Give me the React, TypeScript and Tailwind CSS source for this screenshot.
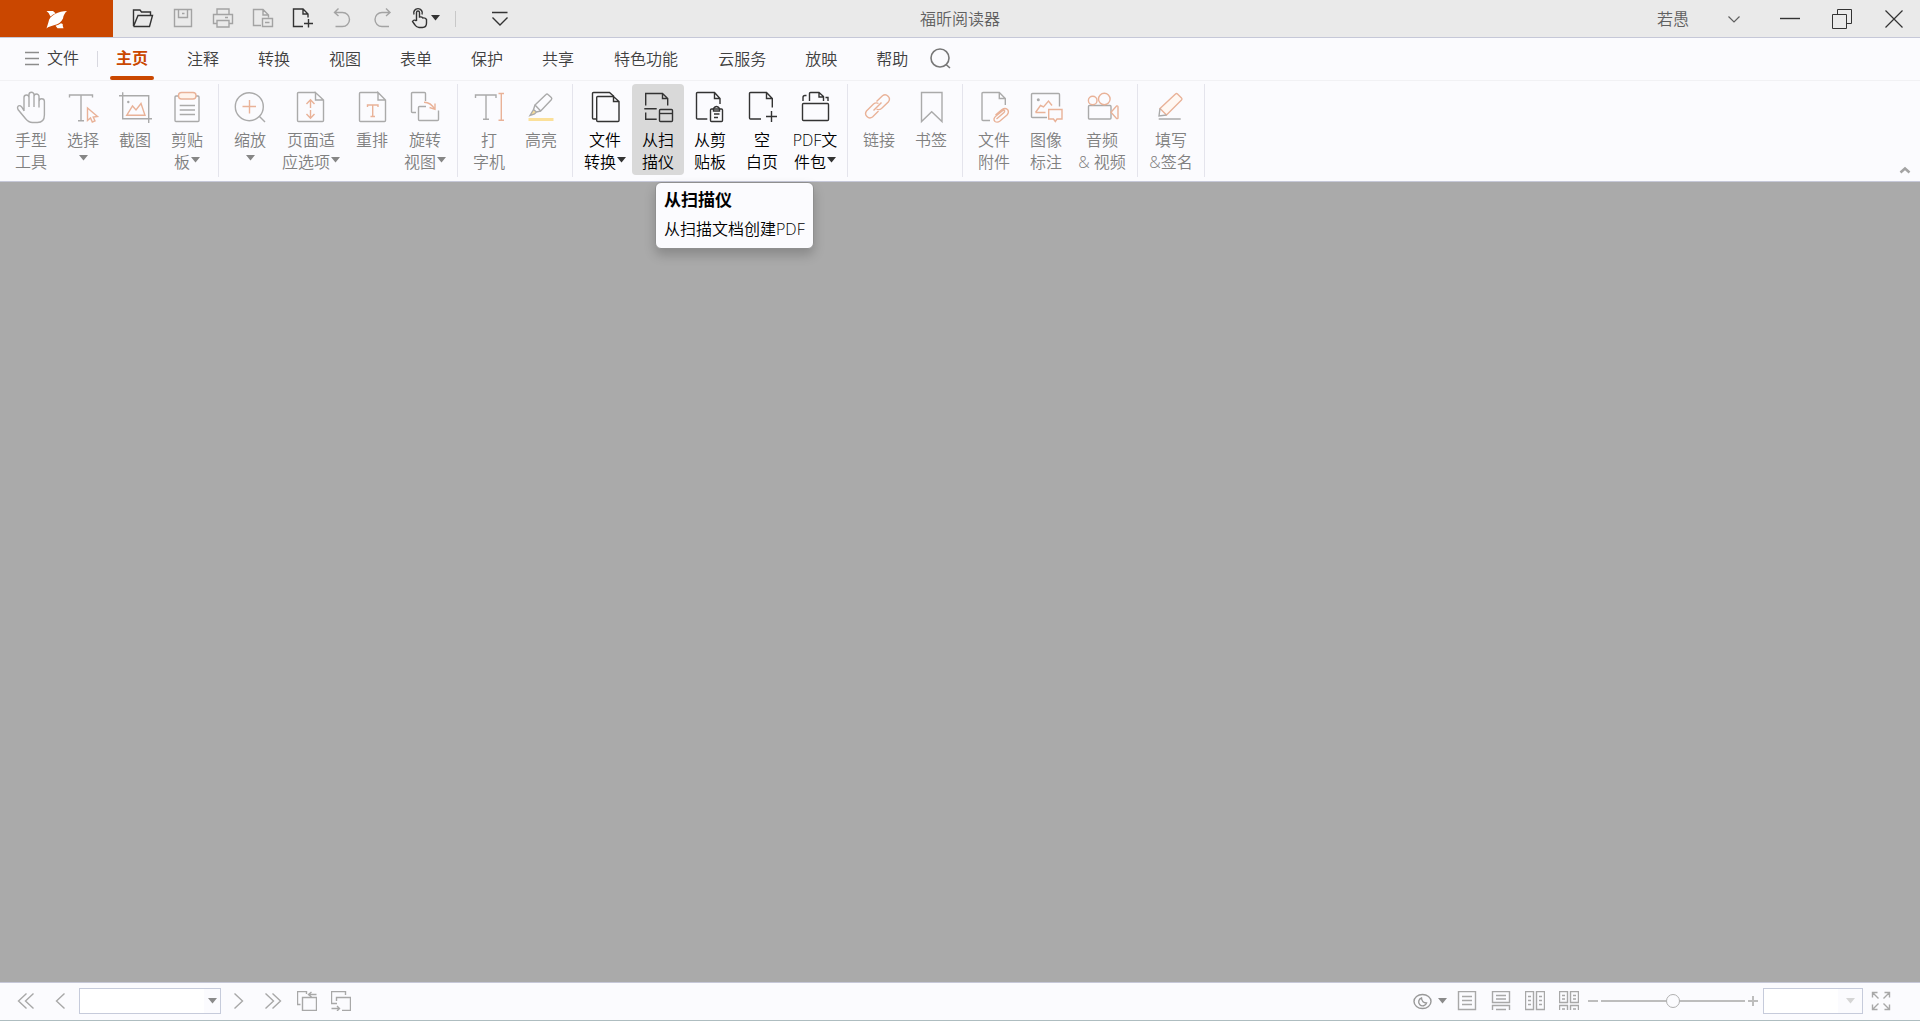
import React from "react";
import clsx from "clsx";

type IconProps = {
  size?: number;
  width?: number;
  className?: string;
  children: React.ReactNode;
};

function Icon({ size = 24, width, className, children }: IconProps) {
  return (
    <svg
      width={width ?? size}
      height={size}
      viewBox={`0 0 ${width ?? size} ${size}`}
      fill="none"
      stroke="currentColor"
      strokeWidth="1.4"
      className={clsx("shrink-0", className)}
      aria-hidden
    >
      {children}
    </svg>
  );
}

function Caret({ className }: { className?: string }) {
  return (
    <svg width="9" height="6" viewBox="0 0 9 6" className={clsx("shrink-0", className)} aria-hidden>
      <path d="M0 0H9L4.5 5.5Z" fill="currentColor" />
    </svg>
  );
}

const ACCENT = "#e9b298";

// Ribbon icons, all drawn on a 36x36 grid
const icons = {
  hand: (
    <path d="M11 22V8.5a2.4 2.4 0 0 1 5 0V18M16 8.5V5.7a2.5 2.5 0 0 1 5 0V18M21 7.5a2.5 2.5 0 0 1 5 0V18.5M26 12.5a2.7 2.7 0 0 1 5.4 0V26c0 5-3 7.5-7 7.5h-5c-3 0-5-1.5-7-4L5 20.5c-1.3-2.5.3-4.5 2.5-3.7 1.6.8 2.3 2.7 3.5 5.2" />
  ),
  select: (
    <>
      <path d="M4.5 8.5V6H27.5V8.5M16 6V31.7M13 31.7H19" />
      <path stroke={ACCENT} d="M22.5 19V31.5L25.5 29 27.3 33 30 31.8 28.2 28 32.5 27.5Z" />
    </>
  ),
  snapshot: (
    <>
      <path d="M5.7 3.3V29.7H35M2 6.7H31.7V34" />
      <circle cx="11.3" cy="13" r="1.2" fill="currentColor" stroke="none" />
      <path stroke={ACCENT} d="M9.7 26.3L15.5 17 19 21 24 14.5 28 26.3Z" />
    </>
  ),
  clipboard: (
    <>
      <rect x="6" y="7" width="24" height="25.5" rx="1" />
      <rect x="9.5" y="3.5" width="17.5" height="6.5" rx="3" fill="#fff4ec" stroke={ACCENT} />
      <path d="M10.7 16.5H26M10.7 21H26M10.7 25.5H26" />
    </>
  ),
  zoom: (
    <>
      <circle cx="17.3" cy="17.7" r="14" />
      <path d="M27 27L33 33" />
      <path stroke={ACCENT} d="M10.5 17.5H24M17.5 11V24.5" />
    </>
  ),
  fit: (
    <>
      <path d="M22.5 3.5H5.5q-1 0-1 1V31.5q0 1 1 1H29.5q1 0 1-1V11L22.5 3.5V11H30.5" />
      <path stroke={ACCENT} d="M17.5 19V11M13.5 15L17.5 10.8 21.5 15M17.5 21V29M13.5 25L17.5 29.2 21.5 25" />
    </>
  ),
  reflow: (
    <>
      <path d="M24 3.5H6.5q-1 0-1 1V31.5q0 1 1 1H30.5q1 0 1-1V11L24 3.5V11H31.5" />
      <path stroke={ACCENT} d="M13.5 18V16H24V18M18.7 16V27.5M16.5 27.5H21" />
    </>
  ),
  rotate: (
    <>
      <path d="M9 23.5H5.5q-1 0-1-1V4.5q0-1 1-1H17.5q1 0 1 1V12" />
      <path d="M19 17.5H12.5q-1 0-1 1V30.5q0 1 1 1H30.5q1 0 1-1V21.5" />
      <path stroke={ACCENT} d="M17 13.3q7 0 10.5 7M22.5 18.5L28 20.3V14.5" />
    </>
  ),
  typewriter: (
    <>
      <path d="M4.5 9V6H25V9M15 6V30.3M12 30.3H18" />
      <path stroke={ACCENT} d="M27.5 4.5H33M27.5 31.3H33M30.3 4.5V31.3" />
    </>
  ),
  highlight: (
    <>
      <path d="M10.5 21L7 26.5 11.5 25 13.3 23Z" fill="#f8dd98" stroke="none" />
      <path d="M12 16L23 5.5q1-1 2 0l3.3 3q1 1 0 2.2L17.7 22Z" />
      <path d="M12 16L10.5 20.5 13.5 23 17.7 22M10.5 20.5L7 26.5 11.5 25 13.5 23" />
      <path stroke="#fbe09a" strokeWidth="3" d="M5.5 30.5H30.5" />
    </>
  ),
  convert: (
    <>
      <path d="M9.7 30H6.5q-1 0-1-1V4.5q0-1 1-1H22.5L27 7.5" />
      <path d="M26.5 7.5H10.7q-1 0-1 1V31.5q0 1 1 1H31q1 0 1-1V12.5L26.5 7.5V12.5H32" />
    </>
  ),
  scanner: (
    <>
      <path d="M5.7 16.5V4.5H22.5L27.7 9.5V16.5M22.5 4.5V9.5H27.7M4.3 19.7H16.7M5.7 23.5V30.3H16.7" />
      <rect x="19.5" y="20.5" width="13" height="12" rx="1" />
      <path d="M19.5 24.5H32.5" />
    </>
  ),
  fromClipboard: (
    <>
      <path d="M15.3 30H5.5q-1 0-1-1V4.5q0-1 1-1H22.5L28 9.5V15M22.5 3.5V9.5H28" />
      <rect x="18.5" y="20" width="12" height="12.5" rx="1" />
      <path d="M21.5 22V19.5Q24.5 15.5 27.5 19.5V22ZM22 25H27.5M22 28.5H26" />
    </>
  ),
  blank: (
    <path d="M17 30H6.5q-1 0-1-1V4.5q0-1 1-1H22.5L28.3 9.5V18.5M22.5 3.5V9.5H28.3M27.5 22V33M22 27.5H33" />
  ),
  portfolio: (
    <>
      <rect x="5.5" y="14.5" width="26" height="17" rx="1" />
      <path d="M6 12V8.5q0-2 2-2H9.5M12.5 12V4.5q0-1 1-1H22L26.5 7.5V12M22 3.5V8H26.5M28.5 8.5H31V12" />
    </>
  ),
  link: (
    <g stroke={ACCENT}>
      <path d="M15.5 12.5L21.5 6.7a4.3 4.3 0 0 1 6 6L20.5 19.5q-2.5 2-5 .5" />
      <path d="M17.5 22L11.5 28a4.3 4.3 0 0 1-6-6L12.5 15q2.5-2 5-.5" />
      <path d="M12.5 21.5L20.5 13.5" />
    </g>
  ),
  bookmark: <path d="M8.5 3.5H29V32.5L18.7 22.7 8.5 32.5Z" />,
  attachment: (
    <>
      <path d="M14 31.5H7q-1 0-1-1V4.5q0-1 1-1H23.3L29.3 9.5V16M23.3 3.5V9.5H29.3" />
      <path
        stroke={ACCENT}
        d="M20.5 30L28 23.5q1.500-2-.5-2.500L20 27q-3.500 3-1 5.500 2.500 1.500 5-.5L31 26q2.500-3 .5-5.500-2.500-2-5.500 0L19.500 26"
      />
    </>
  ),
  image: (
    <>
      <path d="M19 28.5H4.5q-1 0-1-1V5.5q0-1 1-1H30.5q1 0 1 1V17.5" />
      <circle cx="10.3" cy="10.7" r="1.5" fill="currentColor" stroke="none" />
      <path stroke={ACCENT} d="M7.5 23.5L12.5 16.5 15.5 18 20.5 12 24 16.5M7.5 23.5H17.5" />
      <path stroke={ACCENT} d="M20.7 20.5H34V30H29L27.3 32.5 25.5 30H20.7Z" />
    </>
  ),
  video: (
    <>
      <rect x="4.5" y="16.5" width="22.5" height="13.5" rx="1" />
      <g stroke={ACCENT}>
        <circle cx="8.7" cy="11.5" r="4.3" />
        <circle cx="20.3" cy="10" r="5.8" />
        <path d="M27 23.3L32.5 17q1.5-.5 1.5 1V29q0 1-1.5.5Z" />
      </g>
    </>
  ),
  sign: (
    <>
      <path stroke={ACCENT} fill="#fff8f3" d="M7 19.5L22.5 5q1-1 2 0L28.5 9q1 1 0 2L13.5 26Z" />
      <path d="M7 19.5L6 27 13.5 26M5.7 30H27.7" />
    </>
  ),
};

type Tool = {
  icon: keyof typeof icons;
  top: string;
  bottom?: string;
  menu?: boolean;
  width?: string;
  enabled?: boolean;
  active?: boolean;
};

const groups: Tool[][] = [
  [
    { icon: "hand", top: "手型", bottom: "工具" },
    { icon: "select", top: "选择", menu: true },
    { icon: "snapshot", top: "截图" },
    { icon: "clipboard", top: "剪贴", bottom: "板", menu: true },
  ],
  [
    { icon: "zoom", top: "缩放", menu: true },
    { icon: "fit", top: "页面适", bottom: "应选项", menu: true, width: "w-[70px]" },
    { icon: "reflow", top: "重排" },
    { icon: "rotate", top: "旋转", bottom: "视图", menu: true, width: "w-[54px]" },
  ],
  [
    { icon: "typewriter", top: "打", bottom: "字机" },
    { icon: "highlight", top: "高亮" },
  ],
  [
    { icon: "convert", top: "文件", bottom: "转换", menu: true, width: "w-[54px]", enabled: true },
    { icon: "scanner", top: "从扫", bottom: "描仪", enabled: true, active: true },
    { icon: "fromClipboard", top: "从剪", bottom: "贴板", enabled: true },
    { icon: "blank", top: "空", bottom: "白页", enabled: true },
    { icon: "portfolio", top: "PDF文", bottom: "件包", menu: true, width: "w-[54px]", enabled: true },
  ],
  [
    { icon: "link", top: "链接" },
    { icon: "bookmark", top: "书签" },
  ],
  [
    { icon: "attachment", top: "文件", bottom: "附件" },
    { icon: "image", top: "图像", bottom: "标注" },
    { icon: "video", top: "音频", bottom: "& 视频", width: "w-[60px]" },
  ],
  [{ icon: "sign", top: "填写", bottom: "&签名", width: "w-14" }],
];

const tabs = ["注释", "转换", "视图", "表单", "保护", "共享", "特色功能", "云服务", "放映", "帮助"];

function RibbonButton({ tool }: { tool: Tool }) {
  return (
    <div className="relative">
      <button
        className={clsx(
          "flex h-[91px] flex-col items-center rounded-sm pt-[5px] leading-[22px] whitespace-nowrap",
          tool.width ?? "w-[52px]",
          tool.enabled ? "text-black" : "text-[#808080]",
          tool.active && "bg-[#d9d9d9]"
        )}
      >
        <Icon size={36} className={tool.enabled ? "text-[#333]" : "text-[#aaa]"}>
          {icons[tool.icon]}
        </Icon>
        <span className="mt-1">{tool.top}</span>
        <span className="flex gap-px">
          {tool.bottom}
          {tool.menu && (
            <Caret
              className={clsx(
                tool.bottom ? "mt-[6px]" : "mt-1",
                tool.enabled ? "text-[#333]" : "text-[#868686]"
              )}
            />
          )}
        </span>
      </button>
      {tool.active && (
        <div
          role="tooltip"
          className="absolute top-[98px] left-[23px] z-10 rounded-md border border-[#8f8f8f] bg-[#fbfbfe] px-2 pt-[5px] pb-[6px] whitespace-nowrap text-black shadow-[0_6px_12px_rgba(0,0,0,0.2)]"
        >
          <div className="text-[17px] leading-6 font-bold">从扫描仪</div>
          <div className="mt-1 leading-[26px]">从扫描文档创建PDF</div>
        </div>
      )}
    </div>
  );
}

function TitleBar() {
  return (
    <header className="grid h-[38px] shrink-0 grid-cols-[1fr_auto_1fr] items-center border-b border-[#c6c8d8] bg-[#eaeaea]">
      <div className="flex h-full items-center text-[#a3a3a3]">
        <div className="flex h-full w-[113px] items-center justify-center bg-[#ca4700] text-white">
          <Icon>
            <g fill="currentColor" stroke="none">
              <path d="M1.5 4H8L10.5 6.2Q7.5 7.5 5.5 9.5Q4.5 6 1.5 4Z" />
              <path d="M22 4C14 4 4 8.5 3.5 15L1.5 21.5C5 17.8 14.5 19.5 18 11.5Q18.5 7 22 4Z" />
              <path d="M16 16.2L17.7 17Q17.5 19.5 18.5 21.3H12.5L10.5 18.7Q13.5 18 16 16.2Z" />
            </g>
          </Icon>
        </div>
        <div className="mb-[2px] ml-[18px] flex items-center gap-4">
          <button aria-label="打开" className="text-[#333]">
            <Icon>
              <path d="M2.5 20V4H9L10.5 6H19.5V9.5M2.5 20.5H18.5L21.5 9.5H7L2.5 20.5" />
            </Icon>
          </button>
          <button aria-label="保存">
            <Icon>
              <path d="M3.5 3.5H20.5V20.5H3.5ZM7.5 3.5V11.5H16.5V3.5M11 7.5H13.5" />
            </Icon>
          </button>
          <button aria-label="打印">
            <Icon>
              <path d="M6 8.5V3H18V8.5M6 17.5H2.5V8.5H21.5V17.5H18M6 14.5H18V21H6ZM14 11.5H17" />
            </Icon>
          </button>
          <button aria-label="另存">
            <Icon>
              <path d="M10 19.5H2.5V3.5H12L17.5 9V11.5M12 3.5V9H17.5M11.5 12.5H21.5V20.5H11.5ZM14 16.5H18.5" />
            </Icon>
          </button>
          <button aria-label="新建" className="text-[#333]">
            <Icon>
              <path d="M12 20.5H2.5V3H12L17 8V11.5M12 3V8H17M17.5 13V21.5M13 17.5H22" />
            </Icon>
          </button>
          <button aria-label="撤销">
            <Icon>
              <path d="M7.5 2.5L3.5 6.5 7.5 10M3.5 6.5H11.5a7 7 0 0 1 0 14H4.5" />
            </Icon>
          </button>
          <button aria-label="重做">
            <Icon>
              <path d="M15 2.5L19 6.5 15 10M19 6.5H11a7 7 0 0 0 0 14H18" />
            </Icon>
          </button>
          <button aria-label="触摸模式" className="flex items-center gap-[2px] text-[#333]">
            <Icon width={18}>
              <path d="M5.5 15V6.5a1.5 1.5 0 0 1 3 0V11q2.5-.5 3.3 1 2.4-.5 3.7 1.5V17q0 4.5-4 4.5H8q-2.5 0-4-2.5L1.5 15.5q1.5-2.5 4-.5" />
              <path d="M3 8.5a4.3 4.3 0 1 1 8 0" />
            </Icon>
            <Caret />
          </button>
        </div>
        <div className="ml-[15px] h-4 w-px bg-[#c8c8c8]" />
        <button aria-label="自定义快速访问工具栏" className="ml-8 text-[#333]">
          <Icon>
            <path d="M4 5.5H19.5M4.5 10.5L12 18 19.5 10.5" />
          </Icon>
        </button>
      </div>
      <h1 className="text-[#606060]">福昕阅读器</h1>
      <div className="flex items-center justify-end pr-[14px] text-[#333]">
        <button className="flex items-center gap-[33px] text-[#606060]">
          若愚
          <Icon>
            <path strokeWidth="1.2" d="M6.5 9.5L12 15 17.5 9.5" />
          </Icon>
        </button>
        <div className="ml-8 flex gap-7">
          <button aria-label="最小化">
            <Icon>
              <path d="M2 11.5H22" />
            </Icon>
          </button>
          <button aria-label="还原">
            <Icon>
              <path strokeWidth="1" d="M2.5 7.5H16.5V21.5H2.5ZM7.5 7.5V2.5H21.5V16.5H16.5" />
            </Icon>
          </button>
          <button aria-label="关闭">
            <Icon>
              <path strokeWidth="1.2" d="M3.5 3.5L20.5 20.5M20.5 3.5L3.5 20.5" />
            </Icon>
          </button>
        </div>
      </div>
    </header>
  );
}

function StatusBar() {
  return (
    <footer className="flex h-[39px] shrink-0 items-center border-t border-b border-t-[#c6c8d8] border-b-[#aebdc0] bg-[#fbfbfe] pb-[2px] text-[#a8a8a8]">
      <div className="flex items-center gap-[14px] pl-4">
        <button aria-label="第一页">
          <Icon size={20}>
            <path d="M10.5 2.5L2.5 10 10.5 17.5M17.5 2.5L9.5 10 17.5 17.5" />
          </Icon>
        </button>
        <button aria-label="上一页">
          <Icon size={20}>
            <path d="M14.5 2.5L6.5 10 14.5 17.5" />
          </Icon>
        </button>
      </div>
      <div className="ml-[9px] flex h-[26px] w-[142px] items-center border border-[#c6cbdb] bg-white">
        <input aria-label="页码" className="h-full min-w-0 flex-1 px-1 outline-none" />
        <button aria-label="选择页码" className="flex h-full w-4 items-center justify-center bg-[#fbfbfe]">
          <Caret className="text-[#8a8a8a]" />
        </button>
      </div>
      <div className="ml-2 flex items-center gap-[14px]">
        <button aria-label="下一页">
          <Icon size={20}>
            <path d="M5.5 2.5L13.5 10 5.5 17.5" />
          </Icon>
        </button>
        <button aria-label="最后一页">
          <Icon size={20}>
            <path d="M2.5 2.5L10.5 10 2.5 17.5M9.5 2.5L17.5 10 9.5 17.5" />
          </Icon>
        </button>
        <button aria-label="上一视图">
          <Icon size={20}>
            <path d="M3.5 13.5H.5V.5H9.5V3M5.5 6.5H19.5V19.5H5.5ZM19.5 3.5H11.5M14.5 1L11.5 3.5 14.5 6" />
          </Icon>
        </button>
        <button aria-label="下一视图">
          <Icon size={20}>
            <path d="M6 12.5H.5V.5H14.5V4M5.5 10V6.5H19.5V19.5H11M.5 17.5H8.5M6 15L8.5 17.5 6 20" />
          </Icon>
        </button>
      </div>

      <div className="ml-auto flex items-center gap-[14px] pr-[29px]">
        <button aria-label="护眼模式" className="-mr-1 flex items-center gap-[6px] text-[#999]">
          <Icon size={20}>
            <ellipse cx="10.5" cy="10.5" rx="8.5" ry="7" />
            <path d="M9.5 7a4 4 0 1 0 5 5Q10 12 9.500 7Z" />
          </Icon>
          <Caret className="text-[#8a8a8a]" />
        </button>
        <button aria-label="单页">
          <Icon size={20}>
            <path d="M1.5.5H18.5V18.5H1.5ZM5 5.5H15M5 9.5H15M5 13.5H15" />
          </Icon>
        </button>
        <button aria-label="连续">
          <Icon size={20}>
            <path d="M1.5.5H18.5V11.5H1.5ZM5 4.5H15M5 8H15M1.5 19V14.5H18.5V19M5 18.5H15" />
          </Icon>
        </button>
        <button aria-label="双页">
          <Icon size={20}>
            <path d="M.5.5H8.5V18.5H.5ZM11.5.5H19.5V18.5H11.5ZM3 5.5H6M3 9.5H6M3 13.5H6M14 5.5H17M14 9.5H17M14 13.5H17" />
          </Icon>
        </button>
        <button aria-label="双页连续">
          <Icon size={20}>
            <path d="M.5.5H8.5V11.5H.5ZM11.5.5H19.5V11.5H11.5ZM3 4.5H6M3 8H6M14 4.5H17M14 8H17M.5 19V14.5H8.5V19M11.5 19V14.5H19.5V19M3 18H6M14 18H17" />
          </Icon>
        </button>
        <div className="-ml-[6px] flex items-center">
          <button aria-label="缩小">
            <Icon size={12}>
              <path stroke="#bdbdbd" strokeWidth="2" d="M1 6H11" />
            </Icon>
          </button>
          <input
            type="range"
            aria-label="缩放比例"
            defaultValue={50}
            className="mx-[2px] h-4 w-[144px] appearance-none bg-transparent [&::-webkit-slider-runnable-track]:h-[2px] [&::-webkit-slider-runnable-track]:bg-[#bdbdbd] [&::-webkit-slider-thumb]:-mt-[6px] [&::-webkit-slider-thumb]:size-[14px] [&::-webkit-slider-thumb]:appearance-none [&::-webkit-slider-thumb]:rounded-full [&::-webkit-slider-thumb]:border [&::-webkit-slider-thumb]:border-[#b0b0b0] [&::-webkit-slider-thumb]:bg-[#fbfbfe]"
          />
          <button aria-label="放大">
            <Icon size={12}>
              <path stroke="#bdbdbd" strokeWidth="2" d="M1 6H11M6 1V11" />
            </Icon>
          </button>
          <div className="ml-1 flex h-[26px] w-[100px] items-center border border-[#c6cbdb] bg-white">
            <input aria-label="缩放百分比" className="h-full min-w-0 flex-1 px-1 outline-none" />
            <button
              aria-label="选择缩放百分比"
              className="flex h-full w-6 items-center justify-center bg-[#fbfbfe]"
            >
              <Caret className="text-[#d5d5d5]" />
            </button>
          </div>
          <button aria-label="全屏" className="ml-2">
            <Icon size={20}>
              <path d="M1.5 6.5V1.5H6.5M1.5 1.5L7.5 7.5M13.5 1.5H18.5V6.5M18.5 1.5L12.5 7.5M1.5 13.5V18.5H6.5M1.5 18.5L7.5 12.5M13.5 18.5H18.5V13.5M18.5 18.5L12.5 12.5" />
            </Icon>
          </button>
        </div>
      </div>
    </footer>
  );
}

export default function App() {
  return (
    <div className="flex h-screen flex-col bg-[#aaaaaa] font-['Open_Sans','Noto_Sans_CJK_SC',sans-serif] text-base font-[350]">
      <TitleBar />

      {/* Tabs */}
      <nav className="flex h-[43px] shrink-0 items-center border-b border-[#f1f1f4] bg-[#fbfbfe] text-[#404040]">
        <button className="mb-[2px] ml-6 flex items-center gap-[7px]">
          <Icon size={16} className="text-[#8c8c8c]">
            <path d="M1 2.5H15M1 8.5H15M1 14.5H15" />
          </Icon>
          文件
        </button>
        <div className="ml-[18px] h-4 w-px bg-[#d8d8e0]" />
        <button className="ml-[6px] flex h-full flex-col items-center justify-between px-[6px] pt-2 font-bold text-[#ca4700]">
          主页
          <span className="h-1 w-11 rounded-full bg-[#ca4700]" />
        </button>
        <div className="ml-[27px] flex items-center gap-[39px]">
          {tabs.map((tab) => (
            <button key={tab} className={clsx(tab.length > 3 && "px-px")}>
              {tab}
            </button>
          ))}
        </div>
        <button aria-label="搜索" className="ml-5 text-[#777]">
          <Icon>
            <circle cx="12" cy="11" r="9" strokeWidth="1.6" />
            <path strokeWidth="1.6" d="M18 17.5L22 21" />
          </Icon>
        </button>
      </nav>

      {/* Ribbon */}
      <div className="flex h-[101px] shrink-0 items-start border-b border-[#c6c8d8] bg-[#fbfbfe] pt-[3px]">
        {groups.map((tools, i) => (
          <div key={i} className="flex h-[93px] border-r border-[#e4e4ec] px-[5px]">
            {tools.map((tool) => (
              <RibbonButton key={tool.icon} tool={tool} />
            ))}
          </div>
        ))}
        <button aria-label="折叠功能区" className="mr-2 ml-auto self-end pb-1 text-[#a3a3a3]">
          <Icon size={14}>
            <path strokeWidth="2.5" d="M2.5 9.5L7 5.5 11.5 9.5" />
          </Icon>
        </button>
      </div>

      <main className="min-h-0 flex-1" />

      <StatusBar />
    </div>
  );
}
